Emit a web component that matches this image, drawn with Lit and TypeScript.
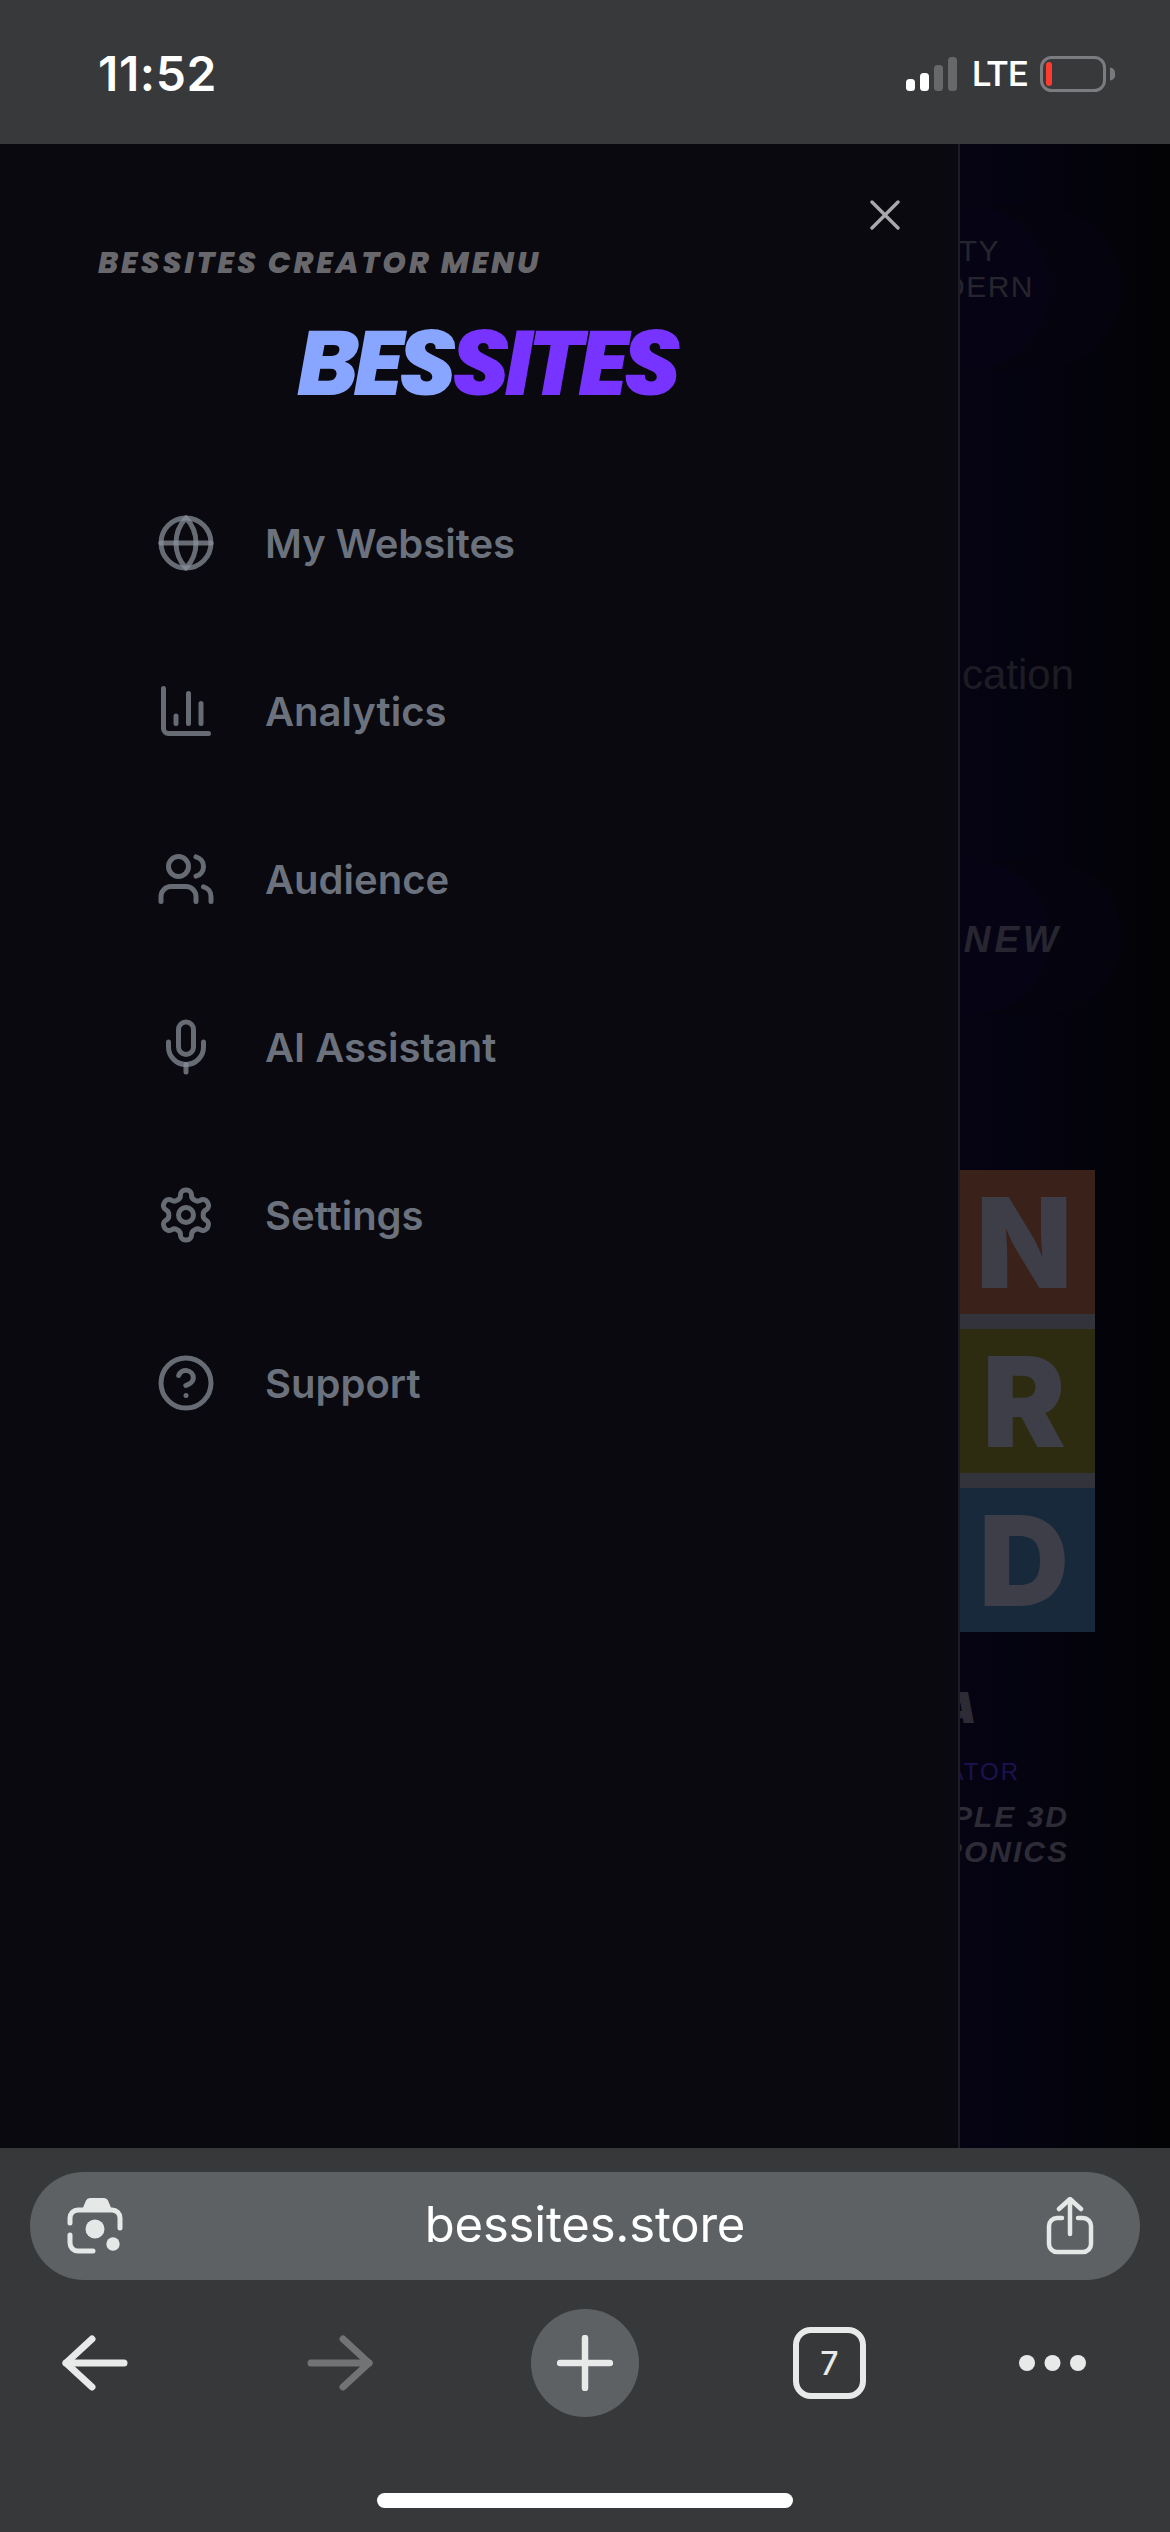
import { LitElement, html, css, svg } from "lit";
import { customElement } from "lit/decorators.js";

const ICONS: Record<string, unknown> = {
  globe: svg`<circle cx="12" cy="12" r="10"/><path d="M12 2a14.5 14.5 0 0 0 0 20 14.5 14.5 0 0 0 0-20"/><path d="M2 12h20"/>`,
  chart: svg`<path d="M3 3v16a2 2 0 0 0 2 2h16"/><path d="M18 17V9"/><path d="M13 17V5"/><path d="M8 17v-3"/>`,
  users: svg`<path d="M16 21v-2a4 4 0 0 0-4-4H6a4 4 0 0 0-4 4v2"/><circle cx="9" cy="7" r="4"/><path d="M22 21v-2a4 4 0 0 0-3-3.87"/><path d="M16 3.13a4 4 0 0 1 0 7.75"/>`,
  mic: svg`<path d="M12 2a3 3 0 0 0-3 3v7a3 3 0 0 0 6 0V5a3 3 0 0 0-3-3Z"/><path d="M19 10v2a7 7 0 0 1-14 0v-2"/><path d="M12 19v3"/>`,
  gear: svg`<path d="M12.22 2h-.44a2 2 0 0 0-2 2v.18a2 2 0 0 1-1 1.73l-.43.25a2 2 0 0 1-2 0l-.15-.08a2 2 0 0 0-2.73.73l-.22.38a2 2 0 0 0 .73 2.73l.15.1a2 2 0 0 1 1 1.72v.51a2 2 0 0 1-1 1.74l-.15.09a2 2 0 0 0-.73 2.73l.22.38a2 2 0 0 0 2.73.73l.15-.08a2 2 0 0 1 2 0l.43.25a2 2 0 0 1 1 1.73V20a2 2 0 0 0 2 2h.44a2 2 0 0 0 2-2v-.18a2 2 0 0 1 1-1.73l.43-.25a2 2 0 0 1 2 0l.15.08a2 2 0 0 0 2.73-.73l.22-.39a2 2 0 0 0-.73-2.73l-.15-.08a2 2 0 0 1-1-1.74v-.5a2 2 0 0 1 1-1.74l.15-.09a2 2 0 0 0 .73-2.73l-.22-.38a2 2 0 0 0-2.73-.73l-.15.08a2 2 0 0 1-2 0l-.43-.25a2 2 0 0 1-1-1.73V4a2 2 0 0 0-2-2z"/><circle cx="12" cy="12" r="3"/>`,
  help: svg`<circle cx="12" cy="12" r="10"/><path d="M9.09 9a3 3 0 0 1 5.83 1c0 2-3 3-3 3"/><path d="M12 17h.01"/>`,
};

const MENU = [
  { icon: "globe", label: "My Websites" },
  { icon: "chart", label: "Analytics" },
  { icon: "users", label: "Audience" },
  { icon: "mic", label: "AI Assistant" },
  { icon: "gear", label: "Settings" },
  { icon: "help", label: "Support" },
];

@customElement("app-root")
export class AppRoot extends LitElement {
  static styles = css`
    :host { display: block; width: 1170px; height: 2532px; overflow: hidden; background: #37383a; font-family: Inter, "Liberation Sans", sans-serif; }
    .screen { display: flex; flex-direction: column; height: 2532px; }

    .status { height: 144px; flex: none; background: #38393b; display: flex; align-items: flex-start; color: #fff; box-sizing: border-box; padding: 48px 55px 0 98px; }
    .time { font-size: 48px; font-weight: 600; line-height: 52px; letter-spacing: 0.6px; }
    .status-right { margin-left: auto; display: flex; align-items: flex-start; }
    .signal { display: flex; align-items: flex-end; gap: 5px; height: 34px; margin-top: 9px; }
    .signal i { display: block; width: 9px; border-radius: 3.5px; background: #fff; }
    .signal .s1 { height: 12px; }
    .signal .s2 { height: 18px; }
    .signal .s3 { height: 26px; background: #66686a; }
    .signal .s4 { height: 34px; background: #66686a; }
    .lte { font-family: Roboto, Inter, sans-serif; font-size: 35px; font-weight: 500; line-height: 44px; margin: 5px 0 0 15px; width: 53px; white-space: nowrap; }
    .battery { margin: 8px 0 0 15px; display: block; }

    .main { flex: 1; display: flex; min-height: 0; }
    .drawer { width: 960px; flex: none; box-sizing: border-box; background: #09090f; border-right: 2px solid #1d1d25; display: flex; flex-direction: column; padding: 56px 0 0 0; }
    .close { display: block; align-self: flex-end; margin-right: 58px; }
    .kicker { font-family: Poppins, Lato, "Liberation Sans", sans-serif; font-size: 30px; line-height: 36px; font-weight: 800; font-style: italic; letter-spacing: 2.95px; color: #68686c; margin: 15px 0 0 98px; white-space: nowrap; }
    .logo { font-family: Poppins, Lato, Inter, sans-serif; font-size: 92px; line-height: 100px; font-weight: 800; font-style: italic; letter-spacing: -5.2px; margin: 32px 0 0 297px; white-space: nowrap; }
    .logo .a { color: #88a5ff; }
    .logo .b { color: #7733ff; }
    nav { display: flex; flex-direction: column; margin-top: 46px; }
    .item { display: flex; align-items: center; height: 168px; padding-left: 156px; color: #6b727d; font-size: 40px; font-weight: 600; }
    .item svg { width: 60px; height: 60px; flex: none; fill: none; stroke: #8a919b; stroke-opacity: 0.72; stroke-width: 2; stroke-linecap: round; stroke-linejoin: round; margin-right: 49px; }

    .ghost { flex: 1; min-width: 0; overflow: hidden; display: flex; flex-direction: column; background: linear-gradient(90deg, #060412 0%, #050312 15%, #04030d 50%, #030307 85%, #030305 100%); white-space: nowrap; }
    .row { display: flex; justify-content: flex-end; font-family: "Liberation Sans", sans-serif; }
    .capsule { flex: none; margin-right: 48px; border-radius: 0 82px 82px 0; background: #060414; box-shadow: inset -72px 0 0 #05040e; display: flex; flex-direction: column; box-sizing: border-box; }
    .cap1 { height: 165px; margin-top: 61px; padding-top: 28px; }
    .cap1 .row { font-size: 30px; line-height: 36px; letter-spacing: 1.5px; color: #26252d; }
    .cap2 { height: 154px; margin-top: 160px; justify-content: center; padding-top: 5px; }
    .cap2 .row { font-size: 37px; line-height: 44px; font-weight: 700; font-style: italic; letter-spacing: 4px; color: #262530; padding-right: 60px; }
    .cation { font-size: 42px; line-height: 50px; color: #1d1c24; margin-top: 280px; padding-right: 96px; }
    .stack { width: 142px; margin: 156px 0 0 -7px; flex: none; background: #33333c; display: flex; flex-direction: column; gap: 15px; font-family: Inter, sans-serif; }
    .stack div { height: 144px; display: flex; align-items: center; justify-content: center; font-size: 125px; font-weight: 900; color: #3e3e48; line-height: 1; }
    .stack .n { background: #3a2119; }
    .stack .r { background: #2e2c10; }
    .stack .d { background: #17293b; }
    .frag { font-family: Poppins, Lato, sans-serif; font-size: 44px; line-height: 44px; font-weight: 900; font-style: italic; color: #2d2c36; margin-top: 54px; padding-right: 194px; }
    .tor { font-size: 24px; line-height: 30px; letter-spacing: 2px; color: #1d1250; margin-top: 27px; padding-right: 150px; }
    .meta { font-size: 30px; line-height: 35px; font-weight: 700; font-style: italic; letter-spacing: 2px; color: #2d2c36; padding-right: 101px; }
    .meta.first { margin-top: 12px; }

    .chrome { height: 384px; flex: none; background: #37383a; display: flex; flex-direction: column; align-items: center; box-sizing: border-box; padding-top: 24px; }
    .url { width: 1110px; height: 108px; flex: none; border-radius: 54px; background: #5d6163; display: flex; align-items: center; justify-content: space-between; box-sizing: border-box; padding: 0 45px 0 37px; position: relative; }
    .url svg { display: block; }
    .host { font-size: 49px; color: #fff; letter-spacing: -0.2px; line-height: 60px; margin-top: -3px; }
    .tools { width: 100%; height: 108px; margin-top: 29px; flex: none; display: flex; align-items: center; }
    .tools svg { display: block; flex: none; }
    .plus { width: 108px; height: 108px; border-radius: 50%; background: #5d6163; display: flex; align-items: center; justify-content: center; flex: none; }
    .tabs { width: 73px; height: 72px; box-sizing: border-box; border: 6px solid #e8eaea; border-radius: 18px; display: flex; align-items: center; justify-content: center; color: #e8eaea; font-size: 32px; font-weight: 500; flex: none; }
    .m-back { margin-left: 62px; }
    .m-fwd { margin-left: 179px; }
    .m-plus { margin-left: 158px; }
    .m-tabs { margin-left: 154px; }
    .m-more { margin-left: 153px; }
    .home { width: 416px; height: 15px; border-radius: 8px; background: #fff; margin-top: 76px; flex: none; }
  `;

  render() {
    return html`
      <div class="screen">
        <div class="status">
          <div class="time">11:52</div>
          <div class="status-right">
            <div class="signal"><i class="s1"></i><i class="s2"></i><i class="s3"></i><i class="s4"></i></div>
            <div class="lte">LTE</div>
            <svg class="battery" width="75" height="36" viewBox="0 0 75 36">
              <rect x="1.5" y="1.5" width="63" height="33" rx="10" fill="none" stroke="#7a7c80" stroke-width="3"/>
              <rect x="6" y="6" width="6" height="24" rx="3" fill="#ff3b30"/>
              <path d="M70 11.5a5.5 6.5 0 0 1 0 13z" fill="#77797c"/>
            </svg>
          </div>
        </div>

        <div class="main">
          <aside class="drawer">
            <svg class="close" width="30" height="30" viewBox="0 0 30 30" fill="none" stroke="#a9a9ab" stroke-width="3.4" stroke-linecap="round"><path d="M2 2l26 26M28 2L2 28"/></svg>
            <div class="kicker">BESSITES CREATOR MENU</div>
            <div class="logo"><span class="a">BES</span><span class="b">SITES</span></div>
            <nav>
              ${MENU.map(
                (m) => html`<div class="item"><svg viewBox="0 0 24 24">${ICONS[m.icon]}</svg><span>${m.label}</span></div>`
              )}
            </nav>
          </aside>
          <div class="ghost">
            <div class="capsule cap1">
              <div class="row" style="padding-right:122px">COMMUNITY</div>
              <div class="row" style="padding-right:88px">MODERN</div>
            </div>
            <div class="row cation">Application</div>
            <div class="capsule cap2"><div class="row">WHAT'S NEW</div></div>
            <div class="stack">
              <div class="n">N</div>
              <div class="r">R</div>
              <div class="d">D</div>
            </div>
            <div class="row frag">A</div>
            <div class="row tor">CREATOR</div>
            <div class="row meta first">SIMPLE 3D</div>
            <div class="row meta">ELECTRONICS</div>
          </div>
        </div>

        <div class="chrome">
          <div class="url">
            <svg width="58" height="58" viewBox="0 0 58 58" fill="none" stroke="#e6e8e8" stroke-width="5" stroke-linecap="round">
              <path d="M3 26V21a8 8 0 0 1 8-8H45a8 8 0 0 1 8 8V31"/>
              <path d="M15 13l4-9.5Q20 1 23 1H37Q40 1 41 3.5L45 13z" fill="#e6e8e8" stroke="none"/>
              <path d="M3 38V46a8 8 0 0 0 8 8H26"/>
              <circle cx="28" cy="32" r="9.5" fill="#e6e8e8" stroke="none"/>
              <circle cx="46" cy="47" r="6.7" fill="#e6e8e8" stroke="none"/>
            </svg>
            <div class="host">bessites.store</div>
            <svg width="50" height="58" viewBox="0 0 50 58" fill="none" stroke="#e6e8e8" stroke-width="4.5" stroke-linecap="round" stroke-linejoin="round">
              <path d="M17 21H12a8 8 0 0 0-8 8V47a8 8 0 0 0 8 8H38a8 8 0 0 0 8-8V29a8 8 0 0 0-8-8H33"/>
              <path d="M25 37V3M14 12L25 2L36 12"/>
            </svg>
          </div>
          <div class="tools">
            <svg class="m-back" width="66" height="56" viewBox="0 0 66 56" fill="none" stroke="#e8eaea" stroke-width="7" stroke-linecap="round" stroke-linejoin="round">
              <path d="M4 28h58"/><path d="M30 4L4 28L30 52"/>
            </svg>
            <svg class="m-fwd" width="66" height="56" viewBox="0 0 66 56" fill="none" stroke="#727375" stroke-width="7" stroke-linecap="round" stroke-linejoin="round">
              <path d="M4 28h58"/><path d="M36 4L62 28L36 52"/>
            </svg>
            <div class="plus m-plus">
              <svg width="56" height="56" viewBox="0 0 56 56" fill="none" stroke="#e8eaea" stroke-width="6.5" stroke-linecap="round">
                <path d="M28 3v50"/><path d="M3 28h50"/>
              </svg>
            </div>
            <div class="tabs m-tabs">7</div>
            <svg class="m-more" width="67" height="16" viewBox="0 0 67 16" fill="#e8eaea">
              <circle cx="8" cy="8" r="8"/><circle cx="33.5" cy="8" r="8"/><circle cx="59" cy="8" r="8"/>
            </svg>
          </div>
          <div class="home"></div>
        </div>
      </div>
    `;
  }
}
